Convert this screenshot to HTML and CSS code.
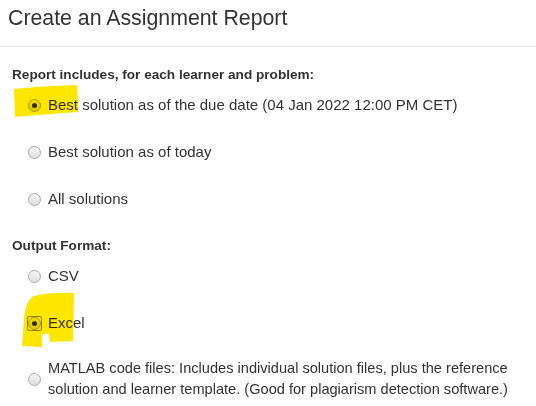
FILE: index.html
```html
<!DOCTYPE html>
<html lang="en">
<head>
<meta charset="utf-8">
<title>Create an Assignment Report</title>
<link rel="stylesheet" href="styles.css">
</head>
<body>
<div class="page">
  <header class="title-bar">
    <h1 class="title">Create an Assignment Report</h1>
  </header>
  <main class="form">
    <section class="group">
      <h2 class="group-title">Report includes, for each learner and problem:</h2>
      <div class="options">
        <label class="option"><span class="radio-box"><input class="radio" type="radio" name="includes" checked></span><span class="option-text">Best solution as of the due date (04 Jan 2022 12:00 PM CET)</span></label>
        <label class="option"><span class="radio-box"><input class="radio" type="radio" name="includes"></span><span class="option-text">Best solution as of today</span></label>
        <label class="option"><span class="radio-box"><input class="radio" type="radio" name="includes"></span><span class="option-text">All solutions</span></label>
      </div>
    </section>
    <section class="group">
      <h2 class="group-title">Output Format:</h2>
      <div class="options">
        <label class="option"><span class="radio-box"><input class="radio" type="radio" name="format"></span><span class="option-text">CSV</span></label>
        <label class="option"><span class="radio-box focused"><input class="radio" type="radio" name="format" checked></span><span class="option-text">Excel</span></label>
        <label class="option option-multi"><span class="radio-box"><input class="radio" type="radio" name="format"></span><span class="option-text">MATLAB code files: Includes individual solution files, plus the reference solution and learner template. (Good for plagiarism detection software.)</span></label>
      </div>
    </section>
  </main>
  <svg class="highlights" width="536" height="406" viewBox="0 0 536 406" aria-hidden="true">
    <path class="marker" d="M14,89 Q40,86 77,85 L78,100 L78,112 Q50,114 15,117 Z"/>
    <path class="marker" d="M22,346 L24,318 Q26,300 34,296 Q50,292 74,293 L73,341 L50,342 L49,334 L42,334 L42,347 Z"/>
  </svg>
</div>
</body>
</html>
```

FILE: styles.css
```css
html, body {
  margin: 0;
  padding: 0;
  background: #ffffff;
}

body {
  font-family: "Liberation Sans", Arial, sans-serif;
  color: #333333;
}

.page {
  position: relative;
  width: 536px;
  height: 406px;
  overflow: hidden;
}

.title-bar {
  padding: 6px 0 15px 8px;
  border-bottom: 1px solid #e5e5e5;
}

.title {
  margin: 0;
  font-size: 21.3px;
  font-weight: normal;
  line-height: 25px;
  color: #333333;
}

.form {
  display: flex;
  flex-direction: column;
  gap: 27px;
  padding: 18px 0 0 12px;
}

.group {
  display: flex;
  flex-direction: column;
}

.group-title {
  margin: 0 0 10px 0;
  font-size: 13.6px;
  font-weight: bold;
  line-height: 20px;
  color: #333333;
}

.options {
  display: flex;
  flex-direction: column;
  gap: 27px;
}

.option {
  display: flex;
  align-items: center;
  font-size: 15px;
  line-height: 20px;
  padding-left: 15px;
}

.option-multi {
  font-size: 14.6px;
  line-height: 21px;
  margin-top: -2px;
}

.radio-box {
  display: flex;
  align-items: center;
  justify-content: center;
  flex: none;
  width: 15px;
  height: 15px;
  margin-right: 6px;
  box-sizing: border-box;
}

.radio-box.focused {
  border: 1px solid #8a8a8a;
  border-radius: 2px;
}

.radio {
  -webkit-appearance: none;
  appearance: none;
  margin: 0;
  width: 13px;
  height: 13px;
  border-radius: 50%;
  border: 1px solid #a9a9a9;
  background: linear-gradient(#f6f6f6, #dedede);
  box-sizing: border-box;
  display: flex;
  align-items: center;
  justify-content: center;
}

.radio:checked::after {
  content: "";
  width: 5px;
  height: 5px;
  border-radius: 50%;
  background: #333333;
}

.option-text {
  display: block;
}

.highlights {
  position: absolute;
  left: 0;
  top: 0;
  pointer-events: none;
  mix-blend-mode: multiply;
}

.marker {
  fill: #ffe600;
}
```
